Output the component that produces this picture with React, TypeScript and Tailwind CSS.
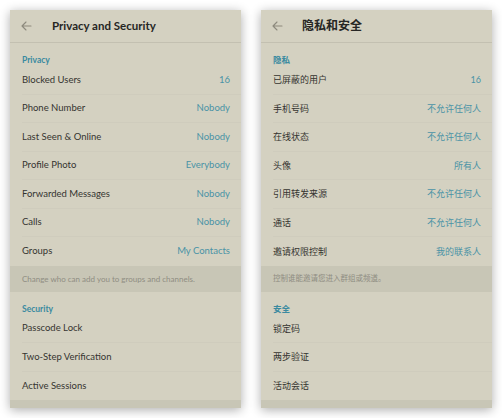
import React from "react";

type Row = { label: string; value?: string };
type Panel = {
  title: string;
  cjk: boolean;
  privacy: string;
  rows: Row[];
  footer1: string;
  security: string;
  srows: Row[];
  footer2: string;
};

const panels: Panel[] = [
  {
    title: "Privacy and Security",
    cjk: false,
    privacy: "Privacy",
    rows: [
      { label: "Blocked Users", value: "16" },
      { label: "Phone Number", value: "Nobody" },
      { label: "Last Seen & Online", value: "Nobody" },
      { label: "Profile Photo", value: "Everybody" },
      { label: "Forwarded Messages", value: "Nobody" },
      { label: "Calls", value: "Nobody" },
      { label: "Groups", value: "My Contacts" },
    ],
    footer1: "Change who can add you to groups and channels.",
    security: "Security",
    srows: [
      { label: "Passcode Lock" },
      { label: "Two-Step Verification" },
      { label: "Active Sessions" },
    ],
    footer2: "Control your sessions on other devices.",
  },
  {
    title: "隐私和安全",
    cjk: true,
    privacy: "隐私",
    rows: [
      { label: "已屏蔽的用户", value: "16" },
      { label: "手机号码", value: "不允许任何人" },
      { label: "在线状态", value: "不允许任何人" },
      { label: "头像", value: "所有人" },
      { label: "引用转发来源", value: "不允许任何人" },
      { label: "通话", value: "不允许任何人" },
      { label: "邀请权限控制", value: "我的联系人" },
    ],
    footer1: "控制谁能邀请您进入群组或频道。",
    security: "安全",
    srows: [{ label: "锁定码" }, { label: "两步验证" }, { label: "活动会话" }],
    footer2: "控制您在其他设备上的会话。",
  },
];

function Arrow() {
  return (
    <svg width="11" height="10" viewBox="0 0 11 10" fill="none">
      <path d="M10 5H1.5M5 1L1 5l4 4" stroke="#8d8a7d" strokeWidth="1.1" strokeLinecap="round" strokeLinejoin="round" />
    </svg>
  );
}

function RowList({ rows, cjk }: { rows: Row[]; cjk: boolean }) {
  return (
    <div className="flex flex-col">
      {rows.map((r, i) => (
        <div
          key={i}
          className={
            "h-[28.5px] ml-[12px] pr-[11px] flex items-center justify-between " +
            (i < rows.length - 1 ? "border-b border-[#cfccbd]" : "")
          }
        >
          <span className={cjk ? "text-[9px] text-[#343430]" : "text-[9.5px] text-[#343430]"}>{r.label}</span>
          {r.value && (
            <span className={cjk ? "text-[9px] text-[#4a93a6]" : "text-[9.5px] text-[#4a93a6]"}>{r.value}</span>
          )}
        </div>
      ))}
    </div>
  );
}

function PanelView({ p }: { p: Panel }) {
  const font = p.cjk
    ? { fontFamily: "Lato, 'Noto Sans CJK SC', sans-serif" }
    : { fontFamily: "Lato, 'Noto Sans', sans-serif" };
  return (
    <div
      className="w-[231px] h-[398px] overflow-hidden bg-[#d4d1c1] shadow-[0_2px_10px_rgba(0,0,0,0.32)] flex flex-col"
      style={font}
    >
      <div className="h-[33px] shrink-0 flex items-center border-b border-[#c3c0b1] pl-[11px]">
        <Arrow />
        <span
          className={
            p.cjk
              ? "ml-[19px] text-[12px] font-bold text-[#262624]"
              : "ml-[20px] text-[11.5px] font-bold text-[#262624]"
          }
        >
          {p.title}
        </span>
      </div>
      <div className="h-[23px] shrink-0 pt-[8px] pl-[12px] leading-[11px]">
        <span className="text-[8.5px] font-bold text-[#3a8aa0]">{p.privacy}</span>
      </div>
      <RowList rows={p.rows} cjk={p.cjk} />
      <div className="h-[26px] shrink-0 bg-[#c8c6b6] flex items-center pl-[12px]">
        <span className={p.cjk ? "text-[7.5px] text-[#8f8d82]" : "text-[8px] text-[#8f8d82]"}>{p.footer1}</span>
      </div>
      <div className="h-[23px] shrink-0 pt-[8px] pl-[12px] leading-[11px]">
        <span className="text-[8.5px] font-bold text-[#3a8aa0]">{p.security}</span>
      </div>
      <RowList rows={p.srows} cjk={p.cjk} />
      <div className="flex-1 bg-[#c8c6b6] pl-[12px] pt-[6px]">
        <span className={p.cjk ? "text-[7.5px] text-[#8f8d82]" : "text-[8px] text-[#8f8d82]"}>{p.footer2}</span>
      </div>
    </div>
  );
}

export default function App() {
  return (
    <div className="w-[502px] h-[418px] bg-white flex gap-[20px] pl-[10px] pt-[10px]">
      {panels.map((p, i) => (
        <PanelView key={i} p={p} />
      ))}
    </div>
  );
}
